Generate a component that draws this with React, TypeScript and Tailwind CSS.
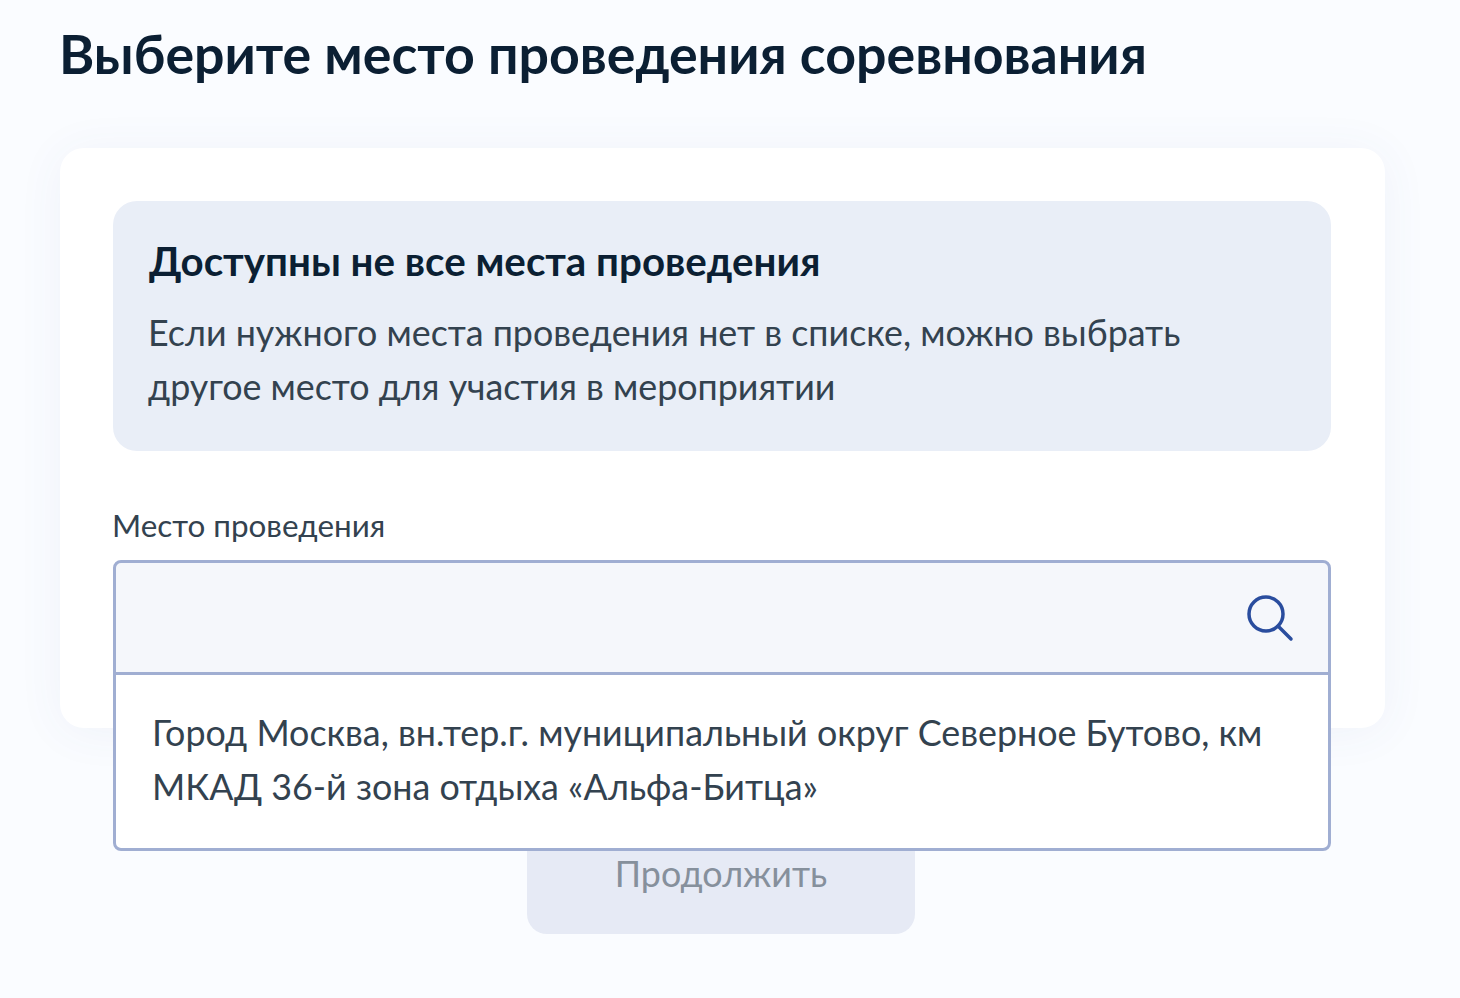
export default function App() {
  return (
    <div className="min-h-[998px] overflow-hidden bg-[#fafcff] pl-[60px] pr-[75px] pt-[21px] font-['Lato','Noto_Sans',sans-serif] text-[#0b1f33]">
      <h1 className="-ml-[1px] text-[53.7px] leading-[64px] font-bold">
        Выберите место проведения соревнования
      </h1>

      {/* Main card */}
      <div className="mt-[63px] h-[580px] rounded-[24px] bg-white pl-[53px] pr-[54px] pt-[53px] shadow-[0_4px_48px_rgba(60,90,160,0.06)]">
        <div className="h-[250px] rounded-[24px] bg-[#e9eef7] px-[36px] pt-[34px]">
          <h2 className="text-[40.3px] leading-[52px] font-bold">
            Доступны не все места проведения
          </h2>
          <p className="mt-[19px] -ml-[1px] text-[35.85px] leading-[54px] text-[#33424f]">
            Если нужного места проведения нет в списке, можно выбрать
            <br />
            другое место для участия в мероприятии
          </p>
        </div>

        <div className="relative mt-[55px]">
          <label className="block -ml-[1px] text-[31.4px] leading-[38px] text-[#33424f]">
            Место проведения
          </label>
          <div className="mt-[16px] flex h-[116px] items-center justify-end rounded-t-[8px] border-[3px] border-[#a0aed2] bg-[#f5f7fb] pr-[33px]">
            <svg width="50" height="50" viewBox="0 0 50 50" fill="none" stroke="#2a4d9e" strokeWidth="3.5" strokeLinecap="round">
              <circle cx="21" cy="21" r="17" />
              <path d="M33 33 L46 46" />
            </svg>
          </div>

          {/* Dropdown */}
          <div className="absolute inset-x-0 top-[166px] z-10 h-[179px] rounded-b-[8px] border-[3px] border-[#a0aed2] bg-white pl-[36px] pt-[31px] text-[35.85px] leading-[54px] text-[#33424f]">
            Город Москва, вн.тер.г. муниципальный округ Северное Бутово, км
            <br />
            МКАД 36-й зона отдыха «Альфа-Битца»
          </div>
        </div>
      </div>

      <div className="mt-[88px] flex justify-center">
        <button className="mr-[3px] h-[118px] w-[388px] rounded-[20px] bg-[#e6eaf5] pb-[2px] text-[35.85px] leading-[54px] text-[#86909c]">
          Продолжить
        </button>
      </div>
    </div>
  );
}
